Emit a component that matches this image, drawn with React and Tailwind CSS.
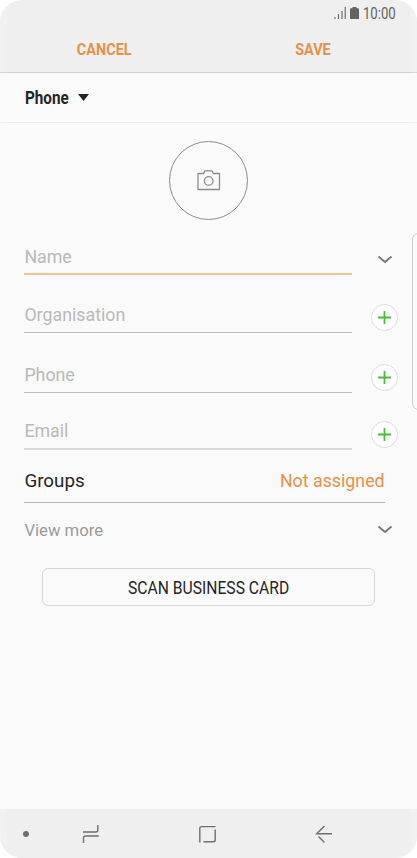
import React from "react";

const fields = [
  { label: "Name", row: "h-[55px]", pad: "pb-[4px]", line: "border-b-2 border-[#ecc795]", action: "expand" },
  { label: "Organisation", row: "h-[58px]", pad: "pb-[5px]", line: "border-b border-[#bdbdbd]", action: "add" },
  { label: "Phone", row: "h-[60px]", pad: "pb-[5px]", line: "border-b border-[#bdbdbd]", action: "add" },
  { label: "Email", row: "h-[57px]", pad: "pb-[5px]", line: "border-b-2 border-[#dadada]", action: "add" },
];

const Chevron = () => (
  <svg className="w-4 h-[9px]" viewBox="0 0 16 9" fill="none" stroke="#777" strokeWidth="1.8">
    <path d="M1.5 1.5 8 7l6.5-5.5" />
  </svg>
);

const AddButton = () => (
  <button className="w-[27px] h-[27px] rounded-full border border-[#dcdcdc] bg-white flex items-center justify-center">
    <svg className="w-[13px] h-[13px]" viewBox="0 0 13 13" stroke="#4dba3c" strokeWidth="1.8">
      <path d="M6.5 0v13M0 6.5h13" />
    </svg>
  </button>
);

const StatusBar = () => (
  <div className="h-[26px] pl-[334px] flex items-center text-[#636363]">
    <svg className="w-3 h-3" viewBox="0 0 12 12" stroke="currentColor" strokeWidth="1.1">
      <path d="M1 12v-2M4.5 12V7M8 12V4M11.2 12V0" />
    </svg>
    <svg className="ml-1 w-[9px] h-3" viewBox="0 0 9 12" fill="currentColor">
      <path d="M2.5 0h4v1.2H8q1 0 1 1V12H0V2.2q0-1 1-1h1.5z" />
    </svg>
    <span className="ml-1 pt-px text-[16px] leading-5 origin-left scale-x-[0.82]">10:00</span>
  </div>
);

const NavBar = () => (
  <nav className="h-[49px] bg-[#efefef] flex items-center pl-[23px] text-[#6e6e6e]">
    <span className="w-1.5 h-1.5 rounded-full bg-current" />
    <svg className="ml-[53px] w-[18px] h-5" viewBox="0 0 18 20" fill="none" stroke="currentColor" strokeWidth="1.4">
      <path d="M1 8h12.8q2 0 2-2V1M16.8 12H3.500q-2 0-2 2v5" />
    </svg>
    <svg className="ml-[98px] w-[19px] h-[18px]" viewBox="0 0 19 18" fill="none" stroke="currentColor" strokeWidth="1.4">
      <path d="M1.800 17.400V3.400q0-1.800 1.800-1.800H17.500M17.200 4.500v10.400q0 1.800-1.800 1.800H5.500" />
    </svg>
    <svg className="ml-[98px] w-[18px] h-[18px]" viewBox="0 0 18 18" fill="none" stroke="currentColor" strokeWidth="1.4">
      <path d="M9.500 1 1.700 8.700H17M3.500 11.500l6 6" />
    </svg>
  </nav>
);

const App = () => {
  return (
    <div className="bg-white w-[417px] h-[858px] font-['Roboto',sans-serif]">
      <div className="relative w-full h-full rounded-[22px] overflow-hidden bg-[#fafafa] flex flex-col">
        <header className="h-[73px] bg-[#efefef] border-b border-[#d0d0d0]">
          <StatusBar />
          <div className="flex h-[46px] pt-px text-[17px] font-bold text-[#e5914a]">
            <button className="w-1/2 flex items-center justify-center">
              <span className="scale-x-[0.85]">CANCEL</span>
            </button>
            <button className="w-1/2 flex items-center justify-center">
              <span className="scale-x-[0.85]">SAVE</span>
            </button>
          </div>
        </header>

        <div className="h-[50px] pl-[24.5px] flex items-center border-b border-[#eeeeee] text-[#252525]">
          <span className="w-[43px] pt-0.5 text-[17.5px] font-bold origin-left scale-x-[0.87]">Phone</span>
          <svg className="ml-[10px] w-[11px] h-[7px]" viewBox="0 0 11 7" fill="currentColor">
            <path d="M0 0h11L5.500 7z" />
          </svg>
        </div>

        <main className="flex-1 pl-6">
          <div className="pt-[18px] pl-[145px]">
            <button className="w-[79px] h-[79px] rounded-full border border-[#8c8c8c] flex items-center justify-center">
              <svg className="w-6 h-[21px]" viewBox="0 0 24 21" fill="none" stroke="#8c8c8c" strokeWidth="1.3">
                <path d="M1 3.500h5.600l1.200-2.600h7.400l1.200 2.600H22.500v16H1z" strokeLinejoin="round" />
                <circle cx="11.700" cy="10.900" r="4.300" />
              </svg>
            </button>
          </div>

          {fields.map((field) => (
            <div key={field.label} className={`flex ${field.row}`}>
              <div className={`w-[328px] pl-[0.4px] flex items-end ${field.pad} text-[17.8px] leading-6 text-[#b9b9b9] ${field.line}`}>
                {field.label}
              </div>
              <div className="w-[65px] flex items-end justify-center">
                {field.action === "add" ? (
                  <div className="pb-0.5">
                    <AddButton />
                  </div>
                ) : (
                  <div className="pb-[11px]">
                    <Chevron />
                  </div>
                )}
              </div>
            </div>
          ))}

          <div className="w-[361px] h-[53px] px-[0.4px] flex items-end justify-between pb-[9px] border-b border-[#b5b5b5] leading-6">
            <span className="text-[18.8px] text-[#252525]">Groups</span>
            <span className="text-[17.8px] text-[#e5914a]">Not assigned</span>
          </div>

          <div className="w-[369px] h-[53px] pl-[0.4px] flex items-center justify-between text-[16.7px] text-[#9a9a9a]">
            <span className="pt-0.5">View more</span>
            <Chevron />
          </div>

          <button className="mt-3 ml-[18px] w-[333px] h-[38px] rounded-md border border-[#d8d8d8] flex items-center justify-center text-lg text-[#252525]">
            <span className="pt-px scale-x-[0.87]">SCAN BUSINESS CARD</span>
          </button>
        </main>

        <NavBar />

        {/* curved screen edges and the edge panel handle */}
        <div className="absolute inset-y-0 left-0 w-[7px] bg-white/15" />
        <div className="absolute inset-y-0 right-0 w-[7px] bg-white/15" />
        <div className="absolute top-[233px] -right-2 w-[13px] h-[177px] rounded-lg border border-[#cccccc] bg-[#fbfbfb]" />
      </div>
    </div>
  );
};

export default App;
